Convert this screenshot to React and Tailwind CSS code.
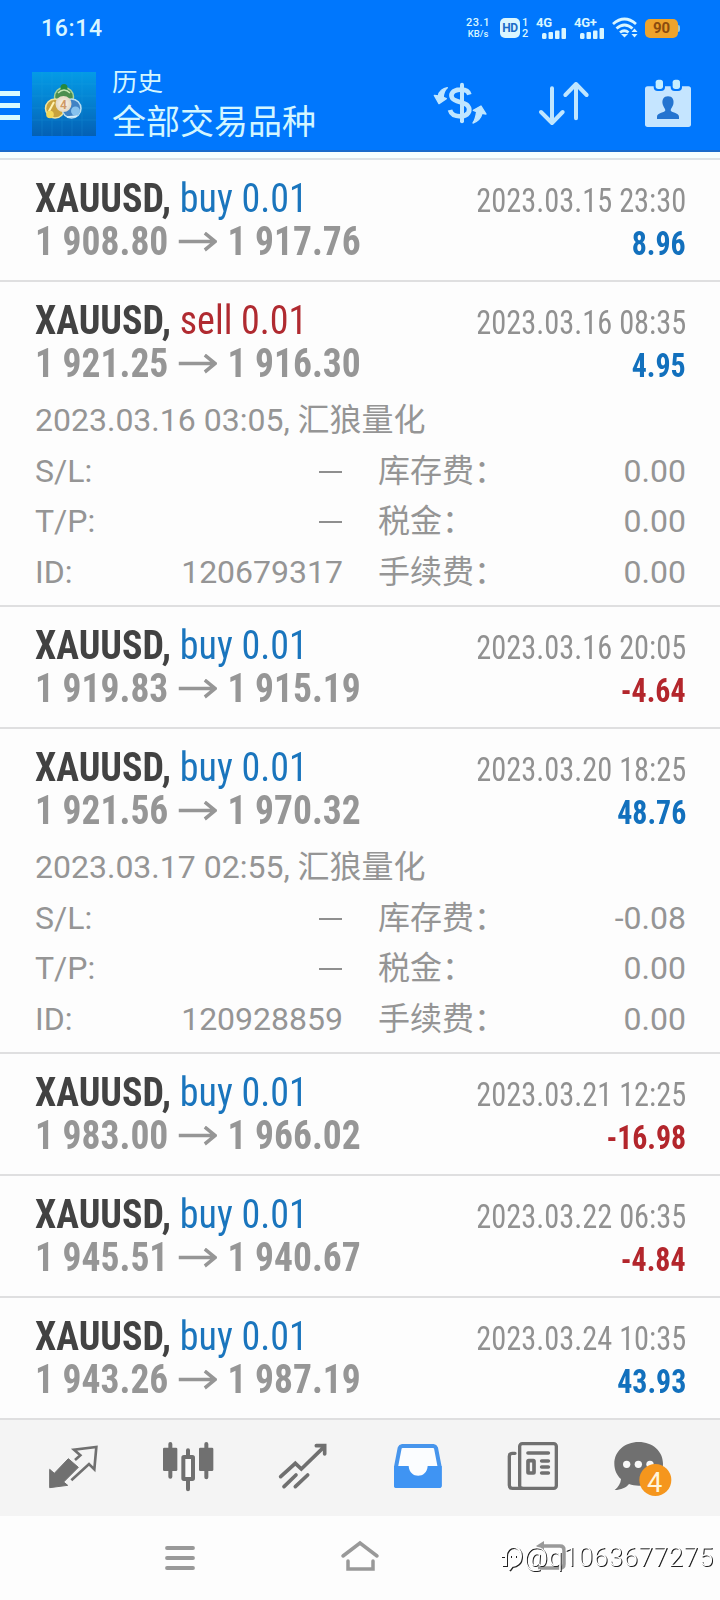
import clsx from "clsx";

const deals = [
    { side: "buy", from: "1 908.80", to: "1 917.76", time: "2023.03.15 23:30", profit: "8.96" },
    {
        side: "sell", from: "1 921.25", to: "1 916.30", time: "2023.03.16 08:35", profit: "4.95",
        detail: { opened: "2023.03.16 03:05, 汇狼量化", id: "120679317", swap: "0.00" },
    },
    { side: "buy", from: "1 919.83", to: "1 915.19", time: "2023.03.16 20:05", profit: "-4.64" },
    {
        side: "buy", from: "1 921.56", to: "1 970.32", time: "2023.03.20 18:25", profit: "48.76",
        detail: { opened: "2023.03.17 02:55, 汇狼量化", id: "120928859", swap: "-0.08" },
    },
    { side: "buy", from: "1 983.00", to: "1 966.02", time: "2023.03.21 12:25", profit: "-16.98" },
    { side: "buy", from: "1 945.51", to: "1 940.67", time: "2023.03.22 06:35", profit: "-4.84" },
    { side: "buy", from: "1 943.26", to: "1 987.19", time: "2023.03.24 10:35", profit: "43.93" },
];

function Signal({ label }) {
    return (
        <div className="w-[30px] h-[22px] flex flex-col">
            <span className="text-[13px] leading-[11px] font-bold tracking-[-0.3px]">{label}</span>
            <svg className="w-[24px] h-[11px] self-end" viewBox="0 0 24 11" fill="currentColor">
                <rect x="0" y="5" width="4.500" height="6" rx="1.500" />
                <rect x="6.500" y="4" width="4.500" height="7" rx="1" />
                <rect x="13" y="2.500" width="4.500" height="8.500" rx="1" />
                <rect x="19.500" y="0" width="4.500" height="11" rx="1" />
            </svg>
        </div>
    );
}

function StatusBar() {
    return (
        <div className="h-14 pl-[41px] pr-[40px] flex items-center justify-between text-[#d9f6ff]">
            <span className="text-[23px] leading-none font-medium tracking-[0.7px]">16:14</span>
            <div className="flex items-center">
                <div className="w-[24px] flex flex-col items-center text-[11px] leading-[11px] font-medium whitespace-nowrap">
                    <span className="tracking-[0.6px]">23.1</span>
                    <span className="text-[9.5px]">KB/s</span>
                </div>
                <div className="ml-[10px] w-[20px] h-[20px] rounded-[5px] bg-[#d9f6ff] text-[#1b6cc8] text-[12px] leading-[20px] font-bold text-center tracking-[-0.5px]">HD</div>
                <div className="ml-[2px] w-[7px] text-[11px] leading-[11px] font-medium">
                    <div>1</div>
                    <div>2</div>
                </div>
                <div className="ml-[7px] w-[31px]"><Signal label="4G" /></div>
                <div className="ml-[7px] w-[31px]"><Signal label="4G+" /></div>
                <svg className="ml-[7px] w-[27px] h-[22px]" viewBox="0 0 27 22" fill="none" stroke="currentColor" strokeWidth="2.800">
                    <path d="M1 7 Q12.500 -3 24 7" />
                    <path d="M4.500 11.500 Q12.500 4.500 20.500 11.500" />
                    <path d="M8 15.500 Q12.500 12 16.500 15.500" />
                    <path d="M9 17 L12.500 20.500 L16 17 Z" fill="currentColor" stroke="none" />
                    <path d="M19.500 15 L22.500 11.500 L25.500 15 Z M19.500 17 L22.500 20.500 L25.500 17 Z" fill="currentColor" stroke="none" />
                </svg>
                <div className="ml-[6px] w-[33px] h-[19px] rounded-[5px] bg-[#eea32b] text-[#8a4b10] text-[15px] leading-[19px] font-bold text-center">90</div>
                <div className="w-[2px] h-[7px] bg-[#9fc4c8] rounded-r-sm" />
            </div>
        </div>
    );
}

function AppLogo() {
    return (
        <svg className="w-16 h-16" viewBox="0 0 64 64">
            <defs>
                <linearGradient id="tile" x1="0" y1="0" x2="0" y2="1">
                    <stop offset="0" stopColor="#049be6" />
                    <stop offset="0.500" stopColor="#047fcf" />
                    <stop offset="1" stopColor="#0460b4" />
                </linearGradient>
                <radialGradient id="coin">
                    <stop offset="0" stopColor="#fff8ea" />
                    <stop offset="1" stopColor="#e2d8c4" />
                </radialGradient>
            </defs>
            <rect width="64" height="64" fill="url(#tile)" />
            <path d="M10 0V64M20 0V64M30 0V64M40 0V64M50 0V64M0 12H64M0 24H64M0 36H64M0 48H64" stroke="#22a6dd" strokeWidth="0.600" opacity="0.350" />
            <circle cx="32" cy="25" r="9.500" fill="#4b8f50" stroke="#a9d49a" strokeWidth="1.500" />
            <circle cx="32" cy="15.500" r="3.500" fill="#26883c" />
            <path d="M26 21Q32 15 38 21" fill="none" stroke="#c6e6b4" strokeWidth="1.500" />
            <circle cx="23" cy="36.500" r="9.500" fill="#c9a23c" stroke="#f1e39c" strokeWidth="1.500" />
            <path d="M16 41L22 30" stroke="#fff3b0" strokeWidth="2" />
            <circle cx="18" cy="42.500" r="3.800" fill="#f4d85a" />
            <circle cx="39.500" cy="36.500" r="9.500" fill="#3f82c4" stroke="#b9def2" strokeWidth="1.500" />
            <circle cx="43.500" cy="39" r="4.500" fill="#86c2ee" />
            <path d="M35 45L45 44" stroke="#d8f0fa" strokeWidth="1.500" />
            <circle cx="31.500" cy="32" r="8" fill="url(#coin)" />
            <text x="31.500" y="36.500" textAnchor="middle" fontSize="12" fontWeight="bold" fill="#cf9a66">4</text>
        </svg>
    );
}

function Header() {
    return (
        <header className="h-[152px] bg-[#0077fd] border-b-2 border-[#1a6bcb]">
            <StatusBar />
            <div className="h-24 flex items-start">
                <div className="w-5 mt-[35px] flex flex-col gap-[7px]">
                    <div className="h-[5px] bg-[#d9fbff]" />
                    <div className="h-[5px] bg-[#d9fbff]" />
                    <div className="h-[5px] bg-[#d9fbff]" />
                </div>
                <div className="ml-3 mt-4"><AppLogo /></div>
                <div className="ml-4 mt-[9px] text-[#d3f6ff]">
                    <div className="text-[25.5px] leading-[34px]">历史</div>
                    <div className="text-[34px] leading-[47px]">全部交易品种</div>
                </div>
                <div className="ml-auto mr-6 mt-5 flex gap-12 text-[#bfe6ff]">
                    <svg className="w-14 h-14" viewBox="96 228 168 168" fill="none" stroke="currentColor">
                        <path d="M208 284 C205 272 194 268 180 269 C157 270 150 284 157 295 C165 307 192 305 203 317 C215 332 203 349 182 349 C163 349 153 342 150 330" strokeWidth="14" />
                        <path d="M186 254V364" strokeWidth="12" strokeLinecap="round" />
                        <path d="M142 263 C129 265 117 274 115 288 L103 286 L117 311 L139 296 L130 292 C130 281 133 271 142 263 Z" fill="currentColor" strokeWidth="4" strokeLinejoin="round" />
                        <path d="M219 369 C233 364 243 353 246 340 L258 342 L243 318 L220 331 L230 335 C228 349 225 361 219 369 Z" fill="currentColor" strokeWidth="4" strokeLinejoin="round" />
                    </svg>
                    <svg className="w-14 h-14" viewBox="408 228 168 168" fill="none" stroke="currentColor" strokeWidth="12" strokeLinecap="round" strokeLinejoin="round">
                        <path d="M456 265V368M423 336L456 369L488 336" />
                        <path d="M528 355V252M496 285L528 252L560 285" />
                    </svg>
                    <svg className="w-14 h-14" viewBox="720 228 168 168">
                        <rect x="735" y="259" width="138" height="122" rx="8" fill="#c5e5ff" />
                        <rect x="761" y="232" width="34" height="41" rx="12" fill="#0077fd" />
                        <rect x="812" y="232" width="34" height="41" rx="12" fill="#0077fd" />
                        <rect x="767" y="239" width="22" height="28" rx="8" fill="#c5eeff" />
                        <rect x="818" y="239" width="22" height="28" rx="8" fill="#c5eeff" />
                        <path d="M804 289 C791 289 785 299 788 313 C790 321 796 326 796 331 C796 338 771 338 771 350 V357 H837 V350 C837 338 812 338 812 331 C812 326 818 321 820 313 C823 299 817 289 804 289 Z" fill="#2474d0" />
                    </svg>
                </div>
            </div>
        </header>
    );
}

function DetailRow({ label, value, rightLabel, rightValue }) {
    return (
        <div className="h-[50.500px] flex">
            <div className="w-[308px] flex justify-between">
                <span>{label}</span>
                <span>{value || <span className="block w-[23px] h-[2px] mt-[25px] mr-[1px] bg-[#8f8f8f]" />}</span>
            </div>
            <div className="ml-[35px] flex-1 flex justify-between">
                <span>{rightLabel}</span>
                <span>{rightValue}</span>
            </div>
        </div>
    );
}

function Deal({ deal }) {
    const { detail } = deal;

    return (
        <div className={clsx("pl-[35px] pr-[34px] pt-[17px] border-b-2 border-[#dfdfe0]", detail ? "h-[325px]" : "h-[122px]")}>
            <div className="font-['Roboto_Condensed',Roboto,sans-serif] font-stretch-condensed">
                <div className="h-[43px] flex items-baseline justify-between text-[40px] leading-[43px] whitespace-nowrap">
                    <div className="origin-left scale-x-[0.95]">
                        <span className="font-bold text-[#424242]">XAUUSD,</span>{" "}
                        <span className={deal.side === "buy" ? "text-[#1a75bd]" : "text-[#b02a30]"}>{deal.side} 0.01</span>
                    </div>
                    <span className="text-[33px] text-[#919191] origin-right scale-x-[0.92]">{deal.time}</span>
                </div>
                <div className="h-[43px] flex items-baseline justify-between text-[40px] leading-[43px] font-bold text-[#969696] whitespace-nowrap">
                    <div className="flex items-baseline origin-left scale-x-[0.938]">
                        <span>{deal.from}</span>
                        <svg className="w-[41px] h-[20px] mx-[11px] self-center" viewBox="0 0 41 20" fill="none" stroke="currentColor" strokeWidth="3.500">
                            <path d="M0 9.500H39M28 1L39 9.500L28 18" />
                        </svg>
                        <span>{deal.to}</span>
                    </div>
                    <span className={clsx("text-[33px] origin-right scale-x-[0.905]", deal.profit.startsWith("-") ? "text-[#b3262c]" : "text-[#1270bd]")}>{deal.profit}</span>
                </div>
            </div>
            {detail && (
                <div className="mt-[10px] text-[32px] leading-[50.500px] text-[#959595] whitespace-nowrap">
                    <div className="h-[50.500px]">{detail.opened}</div>
                    <DetailRow label="S/L:" rightLabel="库存费：" rightValue={detail.swap} />
                    <DetailRow label="T/P:" rightLabel="税金：" rightValue="0.00" />
                    <DetailRow label="ID:" value={detail.id} rightLabel="手续费：" rightValue="0.00" />
                </div>
            )}
        </div>
    );
}

function TabBar() {
    return (
        <nav className="h-24 px-[15px] grid grid-cols-6 items-center justify-items-center bg-[#f4f4f4] text-[#707070]">
            <svg className="size-[60px]" viewBox="130 114 180 180">
                <path d="M150 208L164 220L206 176L236 202L192 246L204 256L150 263Z" fill="currentColor" stroke="currentColor" strokeWidth="3" strokeLinejoin="round" />
                <path d="M226 180L242 166L223 149L290 141L284 208L268 192L215 241" fill="none" stroke="currentColor" strokeWidth="8" />
            </svg>
            <svg className="size-[60px]" viewBox="475 114 180 180">
                <path d="M512 132V230M620 132V232M565 151V170M565 240V268" stroke="currentColor" strokeWidth="12" strokeLinecap="round" />
                <rect x="490" y="143" width="43" height="70" rx="4" fill="currentColor" />
                <rect x="598" y="143" width="43" height="70" rx="4" fill="currentColor" />
                <rect x="551" y="171" width="29" height="66" rx="2" fill="#fafafa" stroke="currentColor" strokeWidth="12" />
            </svg>
            <svg className="size-[60px]" viewBox="820 114 180 180" fill="none" stroke="currentColor" strokeWidth="11" strokeLinecap="round">
                <path d="M843 230L887 190L905 207L974 140M950 137H975V162" />
                <path d="M853 260L889 225M887 260L924 225" />
            </svg>
            <svg className="size-[60px]" viewBox="86 114 180 180">
                <path d="M129 138H222Q228 139 230 144L241 201V258H110V201L121 144Q123 139 129 138Z" fill="#fbfdff" stroke="#4795ec" strokeWidth="12" strokeLinejoin="round" />
                <path d="M104 198H148C150 237 203 237 205 198H247V256Q247 264 239 264H112Q104 264 104 256Z" fill="#3f94f3" />
            </svg>
            <svg className="size-[60px]" viewBox="431 114 180 180" fill="none" stroke="currentColor" strokeWidth="10">
                <rect x="481" y="131" width="110" height="134" rx="8" />
                <path d="M467 160H459Q450 160 450 169V256Q450 265 459 265H490" strokeLinecap="round" />
                <path d="M506 159H567M547 183H567M547 201H567M547 219H567" strokeWidth="11" strokeLinecap="round" />
                <rect x="506" y="182" width="18" height="37" rx="2" strokeWidth="11" />
            </svg>
            <svg className="size-[60px] overflow-visible" viewBox="776 114 180 180">
                <path d="M838 126C796 126 765 154 765 191C765 210 773 226 785 237C784 250 777 262 766 270C785 270 801 263 809 252C818 256 828 257 838 257C880 257 911 228 911 191C911 154 880 126 838 126Z" fill="currentColor" />
                <circle cx="802" cy="193" r="11" fill="#f8f8f8" />
                <circle cx="837" cy="193" r="11" fill="#f8f8f8" />
                <circle cx="872" cy="193" r="11" fill="#f8f8f8" />
                <circle cx="888" cy="240" r="48" fill="#f5961d" />
                <text x="886" y="276" textAnchor="middle" fontSize="82" fill="#fff5dc">4</text>
            </svg>
        </nav>
    );
}

function SystemBar() {
    return (
        <div className="relative h-[84px]">
            <div className="h-full pl-[165px] flex items-center text-[#999]">
                <svg className="w-[30px] h-[26px]" viewBox="0 0 30 26" stroke="currentColor" strokeWidth="3.800" strokeLinecap="round">
                    <path d="M2 3H28M2 13H28M2 23H28" />
                </svg>
                <svg className="w-[40px] h-[32px] ml-[145px] mb-1" viewBox="0 0 40 32" fill="none" stroke="currentColor" strokeWidth="3.500" strokeLinecap="round">
                    <path d="M3 16L20 3L37 16M8 21V29H33V21" />
                </svg>
                <svg className="w-[32px] h-[32px] ml-[154px] mb-1" viewBox="0 0 32 32" fill="none" stroke="currentColor" strokeWidth="3.500">
                    <path d="M5 6H26Q30 6 30 10V24Q30 28 26 28H4" />
                    <path d="M2 6L10 1V11Z" fill="currentColor" stroke="none" />
                </svg>
            </div>
            <div className="absolute left-[500px] top-[23px] flex items-center text-white drop-shadow-[1px_1px_0.5px_#222]">
                <svg className="w-[24px] h-[28px]" viewBox="0 0 24 28" fill="none" stroke="currentColor" strokeWidth="2">
                    <path d="M2 22H6V13C6 1 21 1 21 13C21 20 16 23 12 23L9 27M1 13H6M10 13H11M15 13H16" />
                </svg>
                <span className="text-[26px] leading-[36px] font-light tracking-[0.6px]">@q1063677275</span>
            </div>
        </div>
    );
}

export default function App() {
    return (
        <div className="w-[720px] h-[1600px] overflow-hidden bg-[#fdfdfd] font-[Roboto,'Noto_Sans_CJK_SC',sans-serif]">
            <Header />
            <div className="h-2 bg-[#f7ffff] border-b-2 border-[#dde3e6]" />
            <main>
                {deals.map((deal) => (
                    <Deal key={deal.time} deal={deal} />
                ))}
            </main>
            <TabBar />
            <SystemBar />
        </div>
    );
}
